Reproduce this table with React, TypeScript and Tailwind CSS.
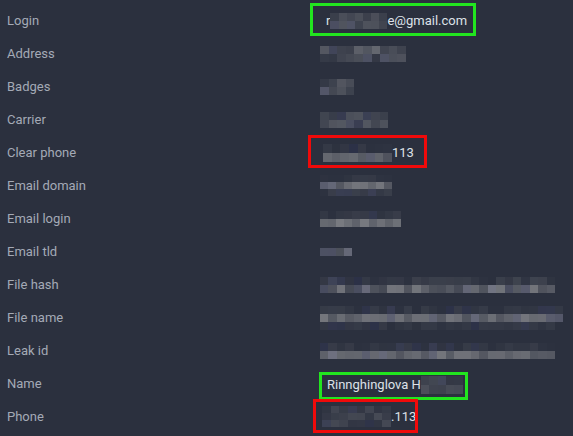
import React from "react";

const BG = [43, 48, 62];

function rand(seed: number) {
  let s = seed;
  return () => {
    s = (s * 9301 + 49297) % 233280;
    return s / 233280;
  };
}

function Mosaic({
  width,
  rows,
  cols,
  seed,
  strength = [0.15, 0.55],
  rowH = 8,
}: {
  width: number;
  rows: number[][];
  cols: number;
  seed: number;
  strength?: number[];
  rowH?: number;
}) {
  const r = rand(seed);
  const cw = width / cols;
  return (
    <div className="flex flex-col shrink-0" style={{ width }}>
      {rows.map((range, ri) => (
        <div key={ri} className="flex" style={{ height: rowH }}>
          {Array.from({ length: cols }).map((_, ci) => {
            const lo = range[0];
            const hi = range[1];
            const t = lo + r() * (hi - lo);
            const c = (v: number) => Math.round(v + (175 - v) * t);
            const blue = r() < 0.2 ? 8 : 0;
            return (
              <div
                key={ci}
                style={{
                  width: cw,
                  height: rowH,
                  background: `rgb(${c(BG[0])},${c(BG[1])},${c(BG[2]) + blue})`,
                }}
              />
            );
          })}
        </div>
      ))}
    </div>
  );
}

const labels = [
  "Login",
  "Address",
  "Badges",
  "Carrier",
  "Clear phone",
  "Email domain",
  "Email login",
  "Email tld",
  "File hash",
  "File name",
  "Leak id",
  "Name",
  "Phone",
];

function Value({ i }: { i: number }) {
  switch (i) {
    case 0:
      return (
        <div className="relative flex items-center h-full">
          <div className="absolute left-[-10px] top-[-1px] w-[166px] h-[33px] border-[3px] border-[#22e51f]" />
          <div className="flex items-center pl-[6px] text-[#dde1e8]">
            <span>r</span>
            <Mosaic width={57} cols={7} seed={3} rows={[[0.05, 0.25], [0.1, 0.3]]} />
            <span>e@gmail.com</span>
          </div>
        </div>
      );
    case 1:
      return <Mosaic width={86} cols={10} seed={11} rows={[[0.05, 0.45], [0.05, 0.3]]} />;
    case 2:
      return <Mosaic width={34} cols={4} seed={21} rows={[[0.05, 0.4], [0.05, 0.35]]} />;
    case 3:
      return <Mosaic width={68} cols={8} seed={31} rows={[[0.05, 0.3], [0.1, 0.35]]} />;
    case 4:
      return (
        <div className="relative flex items-center h-full">
          <div className="absolute left-[-12px] top-[-1px] w-[119px] h-[33px] border-[3px] border-[#f00a0a]" />
          <div className="flex items-end text-[#dde1e8] pl-[3px]">
            <Mosaic width={69} cols={8} seed={41} rows={[[0.0, 0.08], [0.25, 0.5]]} rowH={9} />
            <span className="leading-[18px]">113</span>
          </div>
        </div>
      );
    case 5:
      return <Mosaic width={72} cols={9} seed={51} rows={[[0.0, 0.08], [0.3, 0.55], [0.0, 0.12]]} rowH={7} />;
    case 6:
      return <Mosaic width={81} cols={10} seed={61} rows={[[0.0, 0.1], [0.35, 0.6]]} rowH={8} />;
    case 7:
      return <Mosaic width={32} cols={4} seed={71} rows={[[0.25, 0.45]]} rowH={8} />;
    case 8:
      return <Mosaic width={235} cols={28} seed={81} rows={[[0.0, 0.15], [0.2, 0.55]]} rowH={8} />;
    case 9:
      return <Mosaic width={243} cols={29} seed={91} rows={[[0.0, 0.1], [0.25, 0.55], [0.0, 0.08]]} rowH={8} />;
    case 10:
      return <Mosaic width={235} cols={28} seed={101} rows={[[0.0, 0.1], [0.3, 0.55]]} rowH={8} />;
    case 11:
      return (
        <div className="relative flex items-center h-full">
          <div className="absolute left-[-1px] top-[5px] w-[149px] h-[28px] border-[3px] border-[#22e51f]" />
          <div className="flex items-center pl-[7px] text-[#dde1e8] pt-[2px]">
            <span>Rinnghinglova H</span>
            <Mosaic width={42} cols={5} seed={111} rows={[[0.05, 0.2], [0.1, 0.25]]} rowH={9} />
          </div>
        </div>
      );
    case 12:
      return (
        <div className="relative flex items-center h-full">
          <div className="absolute left-[-7px] top-[-1px] w-[105px] h-[34px] border-[3px] border-[#f00a0a]" />
          <div className="flex items-center text-[#dde1e8] pl-[2px]">
            <Mosaic width={69} cols={8} seed={121} rows={[[0.03, 0.2], [0.03, 0.22], [0.03, 0.2]]} rowH={7} />
            <span>.113</span>
          </div>
        </div>
      );
  }
  return null;
}

export default function App() {
  return (
    <div
      className="w-[573px] h-[436px] bg-[#2b303e] overflow-hidden pt-[4px] text-[13px]"
      style={{ fontFamily: "Roboto, 'Liberation Sans', sans-serif" }}
    >
      {labels.map((l, i) => (
        <div key={l} className="flex h-[33px] items-center">
          <div className="w-[320px] pl-[7px] text-[#a4aab6] shrink-0">{l}</div>
          <div className="flex items-center h-full">
            <Value i={i} />
          </div>
        </div>
      ))}
    </div>
  );
}
